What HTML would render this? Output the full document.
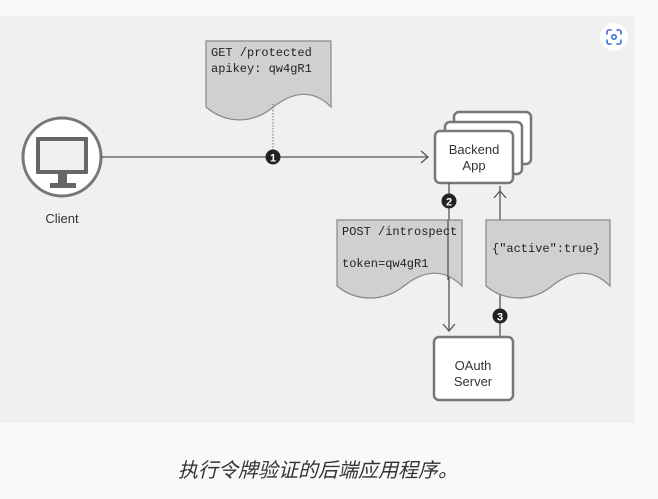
<!DOCTYPE html>
<html><head><meta charset="utf-8"><style>
html,body{margin:0;padding:0;background:#f9f9f9;width:658px;height:499px;overflow:hidden}
svg{display:block}
</style></head><body>
<svg width="658" height="499" viewBox="0 0 658 499" xmlns="http://www.w3.org/2000/svg">
<rect x="0" y="0" width="658" height="499" fill="#f9f9f9"/>
<rect x="0" y="16" width="635" height="407" fill="#f0f0f0"/>
<!-- icon -->
<circle cx="614" cy="37" r="14" fill="#fff"/>
<g fill="none" stroke="#3b6fd6" stroke-width="1.6" stroke-linecap="round">
<path d="M607 34v-2a2 2 0 0 1 2-2h2M617 30h2a2 2 0 0 1 2 2v2M621 40v2a2 2 0 0 1-2 2h-2M611 44h-2a2 2 0 0 1-2-2v-2"/>
<circle cx="614" cy="37" r="2.2"/>
</g>
<!-- client -->
<circle cx="62" cy="157" r="39" fill="#fff" stroke="#777" stroke-width="3"/>
<rect x="36" y="137" width="52" height="37" rx="1" fill="#666"/>
<rect x="40" y="141" width="44" height="29" fill="#f0f0f0"/>
<rect x="58" y="174" width="9" height="9" fill="#666"/>
<rect x="50" y="183" width="26" height="5" fill="#666"/>
<text x="62" y="223" text-anchor="middle" font-family="Liberation Sans, sans-serif" font-size="13" fill="#333">Client</text>
<!-- doc1 -->
<path d="M206,41 H331 V107 C312,88 292,92 272,108 C252,124 226,124 206,107 Z" fill="#d0d0d0" stroke="#888" stroke-width="1.2"/>
<text font-family="Liberation Mono, monospace" font-size="12" fill="#222"><tspan x="211" y="56">GET /protected</tspan><tspan x="211" y="72">apikey: qw4gR1</tspan></text>
<line x1="273" y1="104" x2="273" y2="150" stroke="#777" stroke-dasharray="1.5,1.5"/>
<!-- main line -->
<line x1="101" y1="157" x2="427" y2="157" stroke="#555" stroke-width="1.3"/>
<path d="M421,151 L428,157 L421,163" fill="none" stroke="#555" stroke-width="1.3"/>
<circle cx="273" cy="157" r="7.5" fill="#222"/>
<text x="273" y="161.5" text-anchor="middle" font-family="Liberation Sans, sans-serif" font-weight="bold" font-size="11" fill="#fff">1</text>
<!-- backend -->
<rect x="454" y="112" width="77" height="52" rx="5" fill="#fff" stroke="#777" stroke-width="2.5"/>
<rect x="445" y="122" width="77" height="52" rx="5" fill="#fff" stroke="#777" stroke-width="2.5"/>
<rect x="435" y="131" width="78" height="52" rx="5" fill="#fff" stroke="#777" stroke-width="2.5"/>
<text font-family="Liberation Sans, sans-serif" font-size="13" fill="#333" text-anchor="middle"><tspan x="474" y="154">Backend</tspan><tspan x="474" y="170">App</tspan></text>
<!-- line 2 -->
<line x1="449" y1="183" x2="449" y2="330" stroke="#555" stroke-width="1.3"/>
<path d="M443,324 L449,331 L455,324" fill="none" stroke="#555" stroke-width="1.3"/>
<circle cx="449" cy="201" r="7.5" fill="#222"/>
<text x="449" y="205.5" text-anchor="middle" font-family="Liberation Sans, sans-serif" font-weight="bold" font-size="11" fill="#fff">2</text>
<path d="M337,220 H462 V286 C444,268 424,270 404,286 C384,302 356,302 337,286 Z" fill="#d0d0d0" stroke="#888" stroke-width="1.2"/>
<line x1="448" y1="220" x2="448" y2="280" stroke="#555" stroke-width="1.3"/>
<text font-family="Liberation Mono, monospace" font-size="12" fill="#222"><tspan x="342" y="235">POST /introspect</tspan><tspan x="342" y="267">token=qw4gR1</tspan></text>
<!-- line 3 -->
<line x1="500" y1="337" x2="500" y2="186" stroke="#555" stroke-width="1.3"/>
<path d="M494,198 L500,191 L506,198" fill="none" stroke="#555" stroke-width="1.3"/>
<path d="M486,220 H610 V286 C592,268 572,270 552,286 C532,302 505,302 486,286 Z" fill="#d0d0d0" stroke="#888" stroke-width="1.2"/>
<text x="492" y="252" font-family="Liberation Mono, monospace" font-size="12" fill="#222">{"active":true}</text>
<circle cx="500" cy="316" r="7.5" fill="#222"/>
<text x="500" y="320.5" text-anchor="middle" font-family="Liberation Sans, sans-serif" font-weight="bold" font-size="11" fill="#fff">3</text>
<!-- oauth -->
<rect x="434" y="337" width="79" height="63" rx="5" fill="#fff" stroke="#777" stroke-width="2.5"/>
<text font-family="Liberation Sans, sans-serif" font-size="13" fill="#333" text-anchor="middle"><tspan x="473" y="370">OAuth</tspan><tspan x="473" y="386">Server</tspan></text>
<!-- caption -->
<text x="318" y="477" text-anchor="middle" font-family="Liberation Sans, 'Noto Sans CJK SC', sans-serif" font-size="20" font-style="italic" fill="#333">执行令牌验证的后端应用程序。</text>
</svg>
</body></html>
